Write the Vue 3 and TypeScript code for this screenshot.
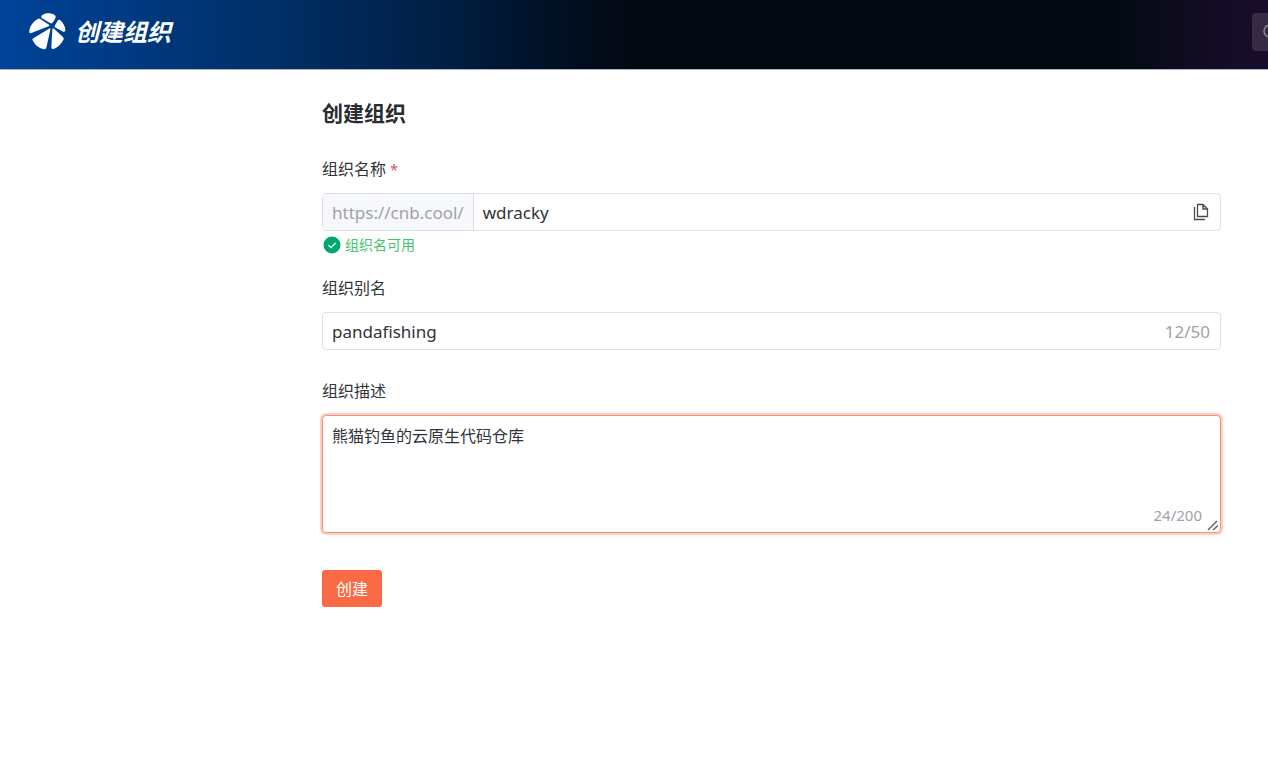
<script setup lang="ts">
import { computed, ref } from 'vue'

const name = ref('wdracky')
const alias = ref('pandafishing')
const description = ref('熊猫钓鱼的云原生代码仓库')

// CJK characters count as two, everything else as one
const weightedLength = (text: string): number =>
  [...text].reduce((sum, ch) => sum + (ch.charCodeAt(0) > 255 ? 2 : 1), 0)

const aliasCount = computed(() => weightedLength(alias.value))
const descriptionCount = computed(() => weightedLength(description.value))
</script>

<template>
  <div class="page">
    <header class="topbar">
      <a class="brand" href="#">
        <svg class="logo" viewBox="0 0 111 111" aria-hidden="true">
          <path d="M37 14C35 7 46 1 58 1C69 1 81 6 80 12C79 18 74 25 70 30C68 32 65 31 63 30Z" />
          <path d="M28 17Q31 15 34 18L60 35Q63 38 59 40L7 60Q1 62 1 56C1 40 13 24 28 17Z" />
          <path d="M87 22Q90 18 94 22C103 31 109 42 109 51Q109 58 103 56L80 44Q74 41 78 37Z" />
          <path d="M60 47Q65 43 64 50L52 104Q51 109 45 109C29 106 17 95 11 82Q9 78 13 76Z" />
          <path d="M70 49Q71 43 75 47L102 72Q106 76 103 81C96 94 85 105 73 108Q67 109 67 103Z" />
        </svg>
        <span>创建组织</span>
      </a>
      <button class="search" type="button" aria-label="搜索">
        <svg viewBox="0 0 18 18" aria-hidden="true">
          <circle cx="8" cy="8" r="6" />
          <path d="M12.5 12.5L16 16" />
        </svg>
      </button>
    </header>

    <main class="content">
      <h1>创建组织</h1>
      <form @submit.prevent>
        <div class="field named">
          <label for="org-name">组织名称 <span class="required">*</span></label>
          <div class="control">
            <span class="prefix">https://cnb.cool/</span>
            <input id="org-name" v-model="name" type="text" />
            <button class="copy" type="button" aria-label="复制">
              <svg viewBox="0 0 16 18" aria-hidden="true">
                <path d="M4.5 1.5H10L14.5 6V13.5H4.5ZM10 1.5V6H14.5M1.5 4V16.5H12" />
              </svg>
            </button>
          </div>
          <p class="status">
            <svg viewBox="0 0 18 18" aria-hidden="true">
              <circle cx="9" cy="9" r="8.5" />
              <path d="M5.5 9.2L8 11.5L12.7 7" />
            </svg>
            组织名可用
          </p>
        </div>

        <div class="field">
          <label for="org-alias">组织别名</label>
          <div class="control">
            <input id="org-alias" v-model="alias" type="text" />
            <span class="count">{{ aliasCount }}/50</span>
          </div>
        </div>

        <div class="field described">
          <label for="org-desc">组织描述</label>
          <div class="area">
            <textarea id="org-desc" v-model="description"></textarea>
            <span class="area-count">{{ descriptionCount }}/200</span>
            <svg class="grip" viewBox="0 0 12 12" aria-hidden="true">
              <path d="M1 11L10 2M6 11L11 6.5" />
            </svg>
          </div>
        </div>

        <button class="submit" type="submit">创建</button>
      </form>
    </main>
  </div>
</template>

<style>
body {
  margin: 0;
  background: #fff;
}
</style>

<style scoped>
.page {
  color: #30333a;
  font-family: "Noto Sans", "Noto Sans CJK SC", sans-serif;
  font-size: 16px;
  line-height: 22px;
  overflow-x: hidden;
}

.page *,
.page {
  box-sizing: border-box;
}

button,
input,
textarea {
  font: inherit;
  color: inherit;
  margin: 0;
}

.topbar {
  height: 70px;
  padding: 0 0 6px 29px;
  display: flex;
  align-items: center;
  justify-content: space-between;
  border-bottom: 1px solid #a9b3c4;
  background: linear-gradient(90deg, #004398 0%, #003a82 10%, #002c60 24%, #001d40 36%, #010e1f 45%, #030913 50%, #030913 88%, #110c20 94%, #190d2d 100%);
}

.brand {
  display: flex;
  align-items: center;
  gap: 9px;
  color: #fff;
  font-size: 24px;
  font-style: italic;
  font-weight: 700;
  line-height: 36px;
  text-decoration: none;
}

.logo {
  width: 37px;
  height: 37px;
  fill: #fff;
}

.search {
  width: 38px;
  height: 38px;
  flex: none;
  margin-right: -22px;
  padding: 0 0 0 10px;
  border: 0;
  border-radius: 4px;
  background: #352b43;
  display: flex;
  align-items: center;
}

.search svg {
  width: 18px;
  height: 18px;
  fill: none;
  stroke: #8c859b;
  stroke-width: 1.5;
}

.content {
  padding: 28px 47px 28px 322px;
}

h1 {
  margin: 0 0 30px;
  font-size: 21px;
  line-height: 30px;
  font-weight: 700;
  color: #292c31;
}

.field {
  margin-bottom: 30px;
}

.field.named {
  margin-bottom: 21px;
}

.field.described {
  margin-bottom: 37px;
}

label {
  display: block;
  margin-bottom: 13px;
}

.required {
  color: #e34d59;
  font-size: 14px;
  line-height: 14px;
}

.control {
  height: 38px;
  display: flex;
  align-items: stretch;
  border: 1px solid #dcdfe8;
  border-radius: 4px;
  overflow: hidden;
  font-size: 17px;
}

.control input {
  flex: 1;
  min-width: 0;
  padding: 1px 9px 0;
  border: 0;
  outline: 0;
  background: transparent;
}

.prefix {
  display: flex;
  align-items: center;
  padding: 1px 9px 0;
  border-right: 1px solid #dcdfe8;
  background: #f7f8fc;
  color: #a0a2a7;
}

.count {
  display: flex;
  align-items: center;
  padding: 1px 10px 0 0;
  color: #a0a2a7;
}

.copy {
  display: flex;
  align-items: center;
  padding: 0 11px 0 0;
  border: 0;
  background: none;
}

.copy svg {
  width: 16px;
  height: 18px;
  fill: none;
  stroke: #484b50;
  stroke-width: 1.3;
}

.status {
  display: flex;
  align-items: center;
  gap: 4px;
  margin: 3px 0 0 1px;
  color: #43c46d;
  font-size: 14px;
}

.status svg {
  width: 18px;
  height: 18px;
  fill: #00a870;
}

.status path {
  fill: none;
  stroke: #fff;
  stroke-width: 1.3;
}

.area {
  position: relative;
}

textarea {
  display: block;
  width: 100%;
  height: 118px;
  padding: 9px;
  border: 1px solid #f88e72;
  border-radius: 4px;
  outline: 0;
  box-shadow: 0 0 0 2px #fdd0c5;
  background: #fff;
  resize: vertical;
}

textarea::-webkit-resizer {
  background: transparent;
}

.area-count {
  position: absolute;
  right: 19px;
  bottom: 7px;
  color: #a0a2a7;
  font-size: 15px;
  pointer-events: none;
}

.grip {
  position: absolute;
  right: 2px;
  bottom: 2px;
  width: 12px;
  height: 12px;
  fill: none;
  stroke: #55585c;
  stroke-width: 1.3;
  pointer-events: none;
}

.submit {
  display: block;
  height: 37px;
  padding: 0 14px;
  border: 0;
  border-radius: 3px;
  background: #fa6a45;
  color: #fff;
}
</style>
